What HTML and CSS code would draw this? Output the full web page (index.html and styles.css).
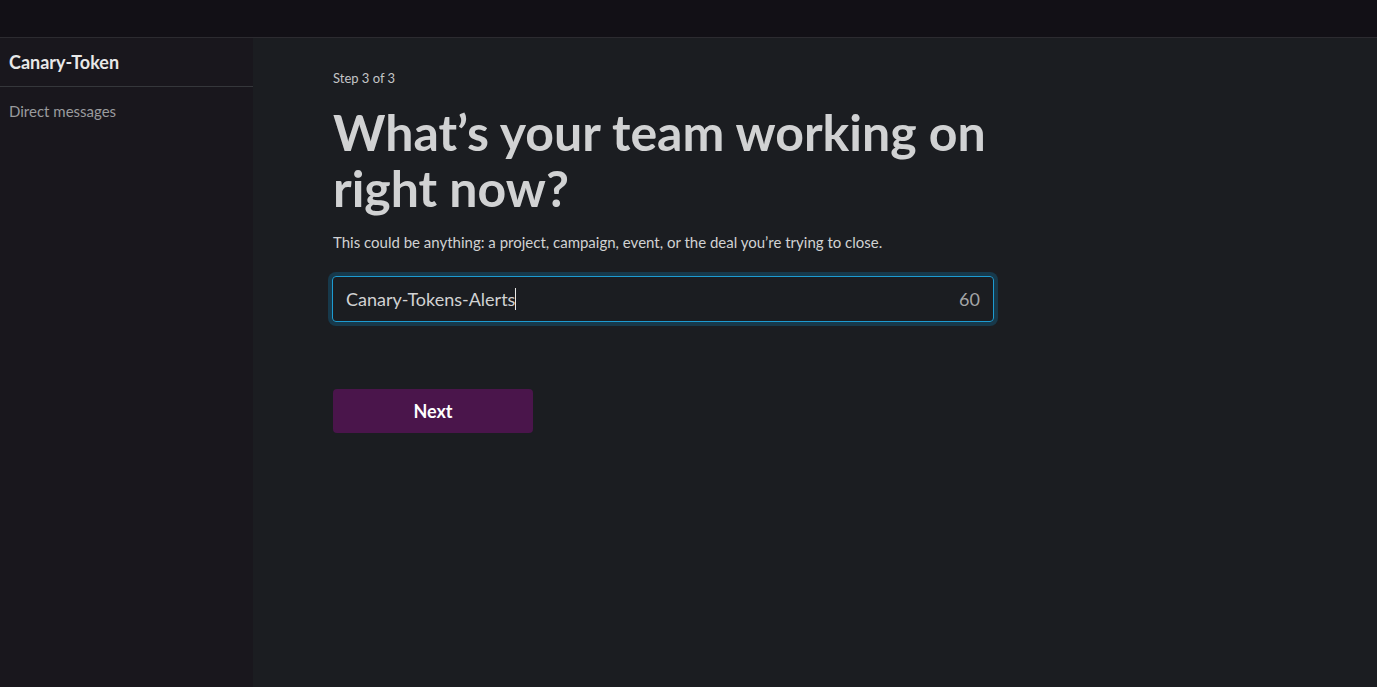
FILE: index.html
```html
<!DOCTYPE html>
<html lang="en">
<head>
  <meta charset="UTF-8" />
  <title>Canary-Token - Setup</title>
  <link rel="stylesheet" href="styles.css">
</head>
<body>
  <div class="top-bar"></div>

  <div class="workspace">
    <aside class="sidebar">
      <div class="team-name">Canary-Token</div>
      <div class="sidebar-item">Direct messages</div>
    </aside>

    <main class="setup">
      <p class="step">Step 3 of 3</p>
      <h1>What’s your team working on right now?</h1>
      <p class="hint">This could be anything: a project, campaign, event, or the deal you’re trying to close.</p>

      <div class="field">
        <span class="field-value">Canary-Tokens-Alerts<span class="caret"></span></span>
        <span class="counter">60</span>
      </div>

      <button class="next-btn">Next</button>
    </main>
  </div>
</body>
</html>
```

FILE: styles.css
```css
* {
  margin: 0;
  padding: 0;
  box-sizing: border-box;
}

body {
  font-family: Lato, "Noto Sans", sans-serif;
  background-color: #1b1d21;
  color: #d1d2d3;
  height: 100vh;
  display: flex;
  flex-direction: column;
}

.top-bar {
  height: 38px;
  background-color: #121016;
  border-bottom: 1px solid #2c2b30;
  flex-shrink: 0;
}

.workspace {
  flex: 1;
  display: flex;
}

/* Left column */
.sidebar {
  width: 253px;
  background-color: #19171d;
  flex-shrink: 0;
}

.team-name {
  height: 49px;
  padding: 13px 9px 0;
  font-size: 18px;
  font-weight: 700;
  color: #e8e8e8;
  border-bottom: 1px solid #35373b;
}

.sidebar-item {
  padding: 15px 9px;
  font-size: 15px;
  color: #9a9b9e;
}

/* Main setup form */
.setup {
  padding: 32px 0 0 80px;
  width: 742px;
}

.step {
  font-size: 13px;
  color: #c4c5c7;
}

h1 {
  margin-top: 18px;
  font-size: 50px;
  line-height: 56px;
  font-weight: 700;
  color: #d1d2d3;
  letter-spacing: 0;
  width: 680px;
}

.hint {
  margin-top: 17px;
  font-size: 15px;
  color: #d1d2d3;
}

.field {
  margin-top: 25px;
  margin-left: -1px;
  width: 662px;
  height: 46px;
  border: 1px solid #1d9bd1;
  border-radius: 4px;
  box-shadow: 0 0 0 4px #17394b;
  display: flex;
  align-items: center;
  justify-content: space-between;
  padding: 0 13px;
  font-size: 18px;
}

.field-value {
  color: #d1d2d3;
  display: flex;
  align-items: center;
}

.caret {
  display: inline-block;
  width: 1px;
  height: 22px;
  background-color: #e8e8e8;
}

.counter {
  color: #a4a5a7;
}

.next-btn {
  margin-top: 67px;
  width: 200px;
  height: 44px;
  border: none;
  border-radius: 4px;
  background-color: #4a154b;
  color: #ffffff;
  font-family: inherit;
  font-size: 18px;
  font-weight: 700;
  cursor: pointer;
}
```
